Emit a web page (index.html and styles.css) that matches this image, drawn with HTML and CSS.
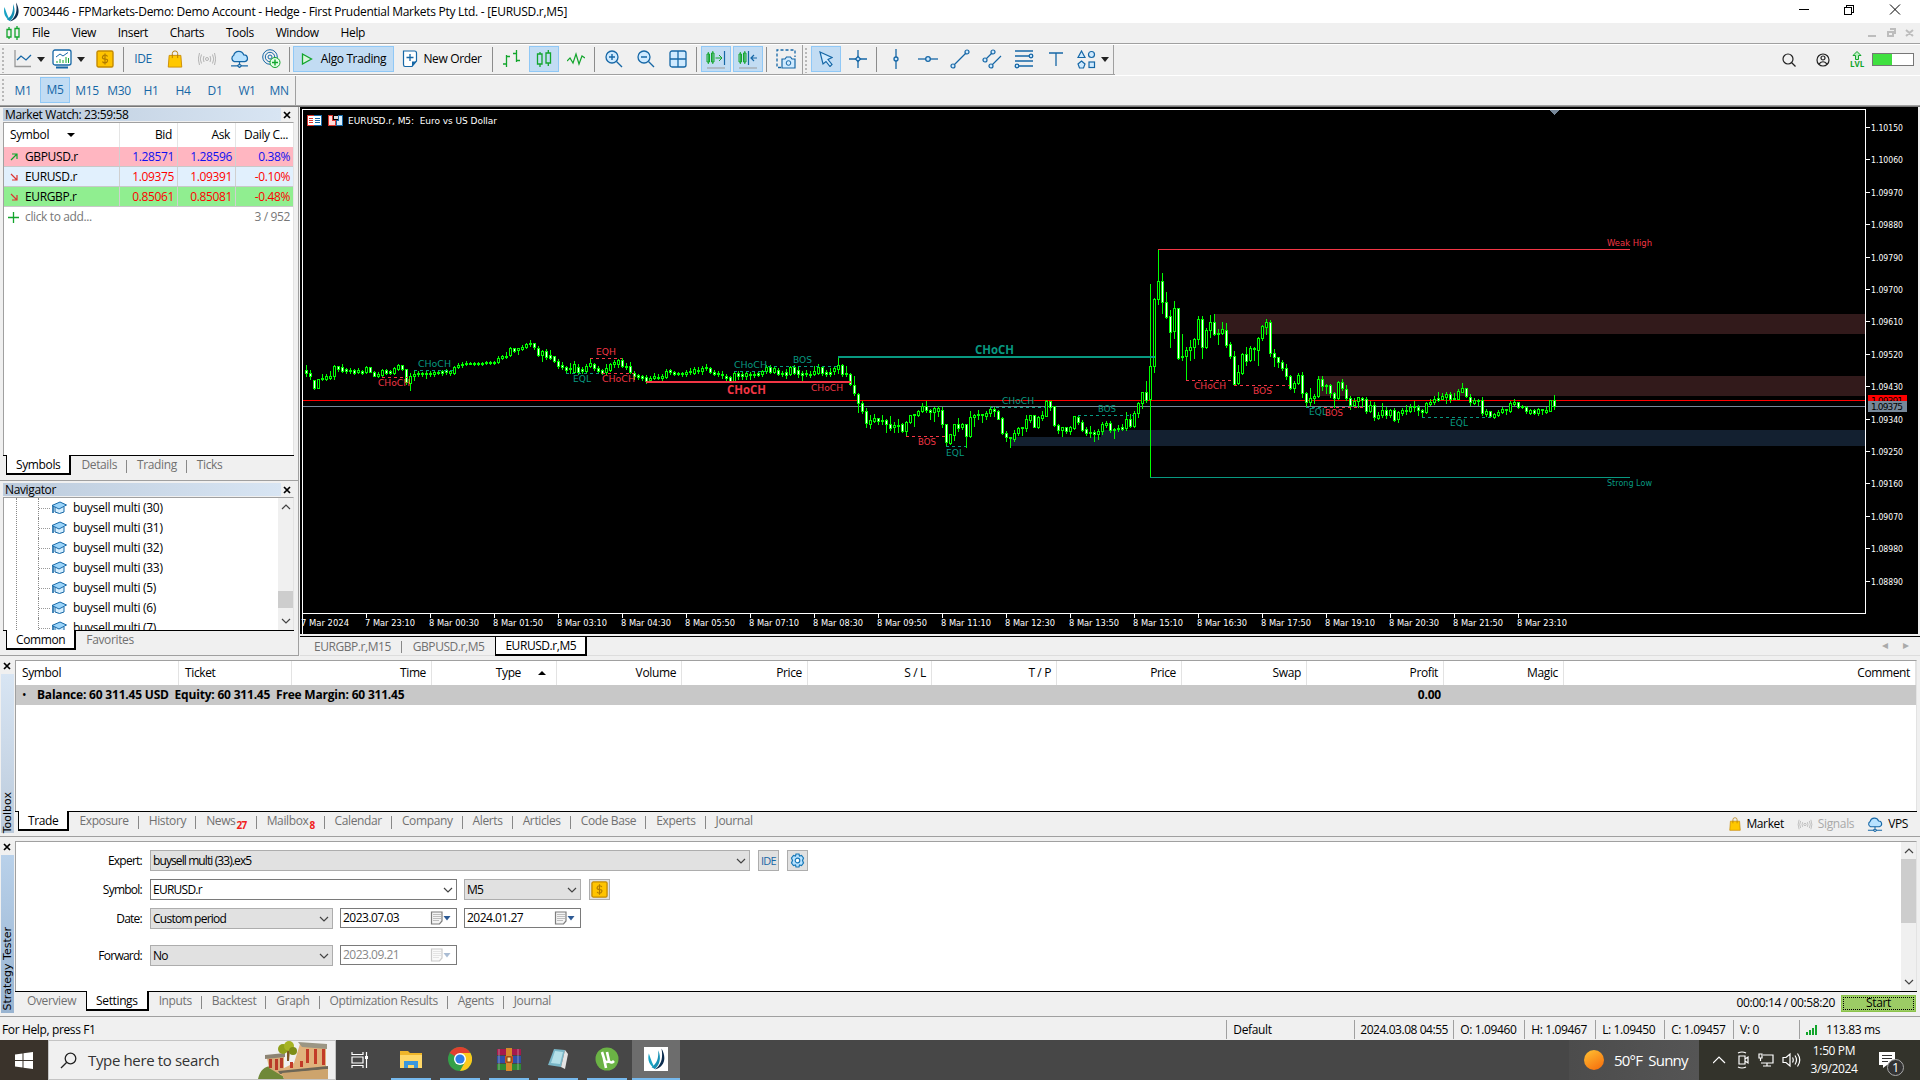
FILE: index.html
```html
<!DOCTYPE html>
<html lang="en">
<head>
    <meta charset="UTF-8">
    <title>7003446 - FPMarkets-Demo: Demo Account</title>
    <link rel="stylesheet" href="styles.css">
</head>
<body>
<svg class="defs" width="0" height="0">
    <defs>
        <symbol id="logo" viewBox="0 0 18 20">
            <path d="M2.500 5C1 11 3 16 8.500 19C6 15 4.500 11 2.500 5Z" fill="#18a3c4"/>
            <path d="M5 17.500C10 14 11.500 9 11 2C14 9 12.500 15 8 19Z" fill="#1590b4"/>
            <path d="M8 19.500C14 15 15.500 9 14 0.500C18.500 8 17.500 17 8 19.500Z" fill="#0c2c4e"/>
        </symbol>
        <symbol id="close" viewBox="0 0 8 8"><path d="M1 1L7 7M7 1L1 7" stroke="#000" stroke-width="1.700"/></symbol>
        <symbol id="bag" viewBox="0 0 16 20">
            <path d="M1.500 6H14.500L15.500 19H0.500Z" fill="#ffc800" stroke="#c98a00"/>
            <path d="M5 9V4A3 3 0 0 1 11 4V9" fill="none" stroke="#b07800"/>
        </symbol>
        <symbol id="signal" viewBox="0 0 18 14">
            <g fill="none" stroke="#b4b4b4" stroke-width="1"><circle cx="9" cy="7" r="1.500"/>
            <path d="M6 4Q4.500 7 6 10M3.500 2.500Q1 7 3.500 11.500M12 4Q13.500 7 12 10M14.500 2.500Q17 7 14.500 11.500M1.500 1Q-1 7 1.500 13M16.500 1Q19 7 16.500 13"/></g>
        </symbol>
        <symbol id="cloud" viewBox="0 0 18 17">
            <path d="M4 11A3.300 3.300 0 0 1 3.500 5A5 5 0 0 1 13 4.500A3.300 3.300 0 0 1 14 11Z" fill="#b8e2ff" stroke="#1667a6" stroke-width="1.200"/>
            <path d="M9 11V14M1 15H6.500M11.500 15H17M7 15L9 13.500L11 15L9 16.500Z" fill="none" stroke="#1667a6" stroke-width="1.200"/>
        </symbol>
        <symbol id="dollar" viewBox="0 0 18 18">
            <rect x="1" y="1" width="16" height="16" rx="1.500" fill="#ffc400" stroke="#c48a00" stroke-width="1.400"/>
            <path d="M11.500 6.500Q11 5 9 5T6.500 7T9 9T11.500 11T9 13T6.500 11.500M9 3.500V14.500" fill="none" stroke="#b07a00" stroke-width="1.200"/>
        </symbol>
        <symbol id="hat" viewBox="0 0 16 14">
            <path d="M4 6V11Q8.500 14 13 11V6" fill="#d6efff" stroke="#1667a6"/>
            <path d="M1 4.500L9 1L15.500 4L8 8Z" fill="#9bd5fb" stroke="#1667a6"/>
            <path d="M2 5V12" stroke="#1667a6" stroke-width="1.600"/>
        </symbol>
        <symbol id="calendar" viewBox="0 0 20 14">
            <path d="M1 1H11.500V10L9 13H1Z" fill="#f4f4f4" stroke="#7d7d7d" stroke-width="1.200"/>
            <path d="M3 3.500H10M3 5.500H10M3 7.500H10M3 9.500H9" stroke="#888" stroke-dasharray="1 1"/>
            <path d="M13 5H20L16.500 9.500Z" fill="#2d5a94"/>
        </symbol>
        <symbol id="down" viewBox="0 0 10 6"><path d="M1 1L5 5L9 1" fill="none" stroke="#444" stroke-width="1.200"/></symbol>
    </defs>
</svg>

<div class="app">
    <header class="titlebar">
        <svg width="18" height="20"><use href="#logo"/></svg>
        <span class="title">7003446 - FPMarkets-Demo: Demo Account - Hedge - First Prudential Markets Pty Ltd. - [EURUSD.r,M5]</span>
        <svg class="winctl" width="106" height="14" viewBox="0 0 106 14" fill="none" stroke="#000" shape-rendering="crispEdges">
            <path d="M1 6.500H11M46.500 4.500H53.500V11.500H46.500ZM48.500 4V2.500H55.500V9.500H54"/>
            <path d="M92 1.500L102 11.500M102 1.500L92 11.500" shape-rendering="auto"/>
        </svg>
    </header>
    <nav class="menubar">
        <svg width="14" height="16" viewBox="0 0 14 16" fill="none" stroke="#12a52c" stroke-width="1.300"><path d="M1 4.500H5V12H1ZM3 2V4.500M3 12V14M9 3.500H13V12H9ZM11 1V3.500M11 12V15"/></svg>
        <span>File</span><span>View</span><span>Insert</span><span>Charts</span><span>Tools</span><span>Window</span><span>Help</span>
        <svg class="mdictl" width="48" height="10" viewBox="0 0 48 10" fill="none" stroke="#bdbdbd" stroke-width="2"><path d="M0 8H8M20 4H25V8H20ZM22 1H27V6M38 2L45 8M45 2L38 8"/></svg>
    </nav>

    <div class="toolbar">
        <i class="grip"></i>
        <div class="tool drop w40"><svg width="18" height="20" viewBox="0 0 18 20" fill="none"><path d="M1 1V17.500H17" stroke="#999" stroke-width="1.300"/><path d="M3 11L7 7L12 11L17 6" stroke="#1667a6" stroke-width="1.300"/></svg><b></b></div>
        <div class="tool drop w43"><svg width="20" height="20" viewBox="0 0 20 20"><rect x="1" y="1" width="18" height="15" rx="2" fill="#fff" stroke="#1667a6" stroke-width="1.300"/><path d="M4 8L8 5L11 7L16 3.500" fill="none" stroke="#1667a6"/><path d="M5 14V12M8 14V10M11 14V11M14 14V8M16.500 14V9" stroke="#12a52c"/><path d="M4 18.500H16" stroke="#1667a6" stroke-width="2"/></svg><b></b></div>
        <div class="tool"><svg width="18" height="18"><use href="#dollar"/></svg></div>
        <i class="sep"></i>
        <div class="tool blue">IDE</div>
        <div class="tool"><svg width="16" height="18"><use href="#bag"/></svg></div>
        <div class="tool"><svg width="18" height="14"><use href="#signal"/></svg></div>
        <div class="tool"><svg width="19" height="18"><use href="#cloud"/></svg></div>
        <div class="tool"><svg width="19" height="20" viewBox="0 0 19 20" fill="none" stroke="#1667a6"><circle cx="8" cy="8" r="2"/><circle cx="8" cy="8" r="4.700"/><circle cx="8" cy="8" r="7.300"/><circle cx="13" cy="13.500" r="5" fill="#e2ffe5" stroke="#12a52c"/><path d="M10 13.500H16M13 10.500V16.500" stroke="#12a52c" stroke-width="1.400"/></svg></div>
        <i class="sep"></i>
        <div class="tool on algo"><svg width="12" height="12" viewBox="0 0 12 12"><path d="M1.500 1L10.500 6L1.500 11Z" fill="#d8f5dc" stroke="#12a52c" stroke-width="1.300"/></svg>Algo Trading</div>
        <div class="tool order"><svg width="16" height="18" viewBox="0 0 16 18"><path d="M1.500 1H12.500Q14.500 1 14.500 3V11L10 16.500H3Q1.500 16.500 1.500 14.500Z" fill="#fff" stroke="#1667a6" stroke-width="1.200"/><path d="M10 16.500V11.500H14.500Z" fill="#1667a6"/><path d="M8 4V11M4.500 7.500H11.500" stroke="#1667a6" stroke-width="1.300"/></svg>New Order</div>
        <i class="sep"></i>
        <div class="tool"><svg width="18" height="18" viewBox="0 0 18 18" fill="none" stroke="#12a52c" stroke-width="1.300"><path d="M0 14H3.500M3.500 5V17M3.500 6.500H7M10 3.500H13.500M13.500 0V12M13.500 10.500H17"/></svg></div>
        <div class="tool on"><svg width="16" height="18" viewBox="0 0 16 18" fill="none" stroke="#12a52c" stroke-width="1.300"><path d="M1.500 4H6V14H1.500ZM4 2V4M4 14V17M10 3H14.500V13H10ZM12.300 0V3M12.300 13V16"/></svg></div>
        <div class="tool"><svg width="18" height="14" viewBox="0 0 18 14" fill="none" stroke="#12a52c" stroke-width="1.200"><path d="M0 9L3 6L6 11L9 2L12 12L15 4L18 6"/></svg></div>
        <i class="sep"></i>
        <div class="tool"><svg width="18" height="18" viewBox="0 0 18 18"><circle cx="7" cy="7" r="6" fill="#cfeaff" stroke="#1667a6" stroke-width="1.300"/><path d="M11.500 11.500L17 17M7 4V10M4 7H10" stroke="#1667a6" stroke-width="1.400"/></svg></div>
        <div class="tool"><svg width="18" height="18" viewBox="0 0 18 18"><circle cx="7" cy="7" r="6" fill="#cfeaff" stroke="#1667a6" stroke-width="1.300"/><path d="M11.500 11.500L17 17M4 7H10" stroke="#1667a6" stroke-width="1.400"/></svg></div>
        <div class="tool"><svg width="18" height="18" viewBox="0 0 18 18"><rect x="1" y="1" width="16" height="16" rx="2" fill="#cfeaff" stroke="#1667a6" stroke-width="1.300"/><path d="M9 1V17M1 9H17" stroke="#1667a6" stroke-width="1.300"/></svg></div>
        <i class="sep"></i>
        <div class="tool on"><svg width="20" height="20" viewBox="0 0 20 20" fill="none"><path d="M1 5H3.500V13H1ZM5.500 4H8V13H5.500ZM2.300 3V15M6.800 2V15M9.500 9H16M13 6L16 9L13 12" stroke="#12a52c"/><path d="M18.500 2V16" stroke="#1667a6" stroke-width="1.200"/><path d="M1 19H19" stroke="#999"/></svg></div>
        <div class="tool on"><svg width="20" height="20" viewBox="0 0 20 20" fill="none"><path d="M1 5H3.500V13H1ZM5.500 4H8V13H5.500ZM2.300 3V15M6.800 2V15" stroke="#12a52c"/><path d="M10.500 2V16M19 9H13M16 6L13 9L16 12" stroke="#1667a6" stroke-width="1.200"/><path d="M1 19H19" stroke="#999"/></svg></div>
        <i class="sep"></i>
        <div class="tool"><svg width="20" height="20" viewBox="0 0 20 20" fill="none" stroke="#1667a6"><path d="M5 18.500H1V1H19V8" stroke-dasharray="3 2" stroke-width="1.300"/><path d="M6 10H9L10.500 8H14.500L16 10H19V19H6Z" fill="#cfeaff" stroke-width="1.200"/><circle cx="12.500" cy="14" r="2.300"/></svg></div>
        <i class="endbar"></i>
        <i class="grip g2"></i>
        <div class="tool on"><svg width="14" height="16" viewBox="0 0 14 16"><path d="M1 1L13 6.500L9 8.500L13 13.500L11 15.500L7 10.500L4 13Z" fill="#cfeaff" stroke="#1667a6" stroke-width="1.200"/></svg></div>
        <div class="tool"><svg width="18" height="18" viewBox="0 0 18 18" stroke="#1667a6" stroke-width="1.300"><path d="M9 0V18M0 9H18"/><path d="M9 6.500L11.500 9L9 11.500L6.500 9Z" fill="#cfeaff"/></svg></div>
        <i class="sep"></i>
        <div class="tool"><svg width="18" height="20" viewBox="0 0 18 20" stroke="#1667a6" stroke-width="1.300"><path d="M9 0V20"/><circle cx="9" cy="10" r="2" fill="#cfeaff"/></svg></div>
        <div class="tool"><svg width="20" height="18" viewBox="0 0 20 18" stroke="#1667a6" stroke-width="1.300"><path d="M0 9H20"/><circle cx="10" cy="9" r="2.300" fill="#cfeaff"/></svg></div>
        <div class="tool"><svg width="20" height="20" viewBox="0 0 20 20" stroke="#1667a6" stroke-width="1.200" fill="#cfeaff"><path d="M3 17L17 3"/><circle cx="3" cy="17" r="2"/><circle cx="17" cy="3" r="2"/></svg></div>
        <div class="tool"><svg width="20" height="20" viewBox="0 0 20 20" stroke="#1667a6" stroke-width="1.200" fill="#cfeaff"><path d="M3 11L11 3M9 17L19 7"/><circle cx="3" cy="11" r="2"/><circle cx="11" cy="3" r="2"/><circle cx="9" cy="17" r="2"/></svg></div>
        <div class="tool"><svg width="20" height="20" viewBox="0 0 20 20" stroke="#1667a6" stroke-width="1.300" fill="#cfeaff"><path d="M1 2H19M1 7H15M1 12H19M5 17H19"/><circle cx="17" cy="7" r="1.800"/><circle cx="3" cy="17" r="1.800"/></svg></div>
        <div class="tool"><svg width="14" height="14" viewBox="0 0 14 14" stroke="#1667a6" stroke-width="1.300"><path d="M0 1H14M7 1V14"/></svg></div>
        <div class="tool drop shapes"><svg width="19" height="19" viewBox="0 0 19 19" stroke="#1667a6" fill="#cfeaff" stroke-width="1.200"><path d="M4.500 1L8 7.500H1ZM4.500 11L8 14L6.500 18H2.500L1 14Z"/><circle cx="14.500" cy="4.500" r="3"/><rect x="12" y="12" width="5.500" height="5.500"/></svg><b></b></div>
        <i class="endbar"></i>
        <div class="account">
            <svg width="14" height="14" viewBox="0 0 14 14" fill="none" stroke="#222" stroke-width="1.200"><circle cx="6" cy="6" r="5"/><path d="M9.500 9.500L13.500 13.500"/></svg>
            <svg width="14" height="14" viewBox="0 0 14 14" fill="none" stroke="#222" stroke-width="1.200"><circle cx="7" cy="7" r="6"/><circle cx="7" cy="5" r="2"/><path d="M3 11Q7 6.500 11 11"/></svg>
            <div class="lvl"><svg width="10" height="9" viewBox="0 0 10 9"><path d="M5 0.500L9 4.500H6.500V8.500H3.500V4.500H1Z" fill="#b9f0c0" stroke="#12a52c"/></svg>LVL</div>
            <div class="battery"><i></i></div>
        </div>
    </div>
    <div class="periods">
        <i class="grip"></i>
        <span>M1</span><span class="on">M5</span><span>M15</span><span>M30</span><span>H1</span><span>H4</span><span>D1</span><span>W1</span><span>MN</span>
        <i class="endbar"></i>
    </div>

    <main class="workspace">
        <aside class="left">
            <section class="panel watch">
                <div class="cap"><span>Market Watch: 23:59:58</span><svg width="8" height="8"><use href="#close"/></svg></div>
                <div class="pbody">
                    <div class="quote head"><span>Symbol<b class="tri"></b></span><span>Bid</span><span>Ask</span><span>Daily C...</span></div>
                    <div class="quote pink up"><span><svg width="8" height="8" viewBox="0 0 8 8"><path d="M1 7L7 1M2 1H7V6" fill="none" stroke="#12a52c" stroke-width="1.200"/></svg>GBPUSD.r</span><span>1.28571</span><span>1.28596</span><span>0.38%</span></div>
                    <div class="quote pale"><span><svg width="8" height="8" viewBox="0 0 8 8"><path d="M1 1L7 7M7 2V7H2" fill="none" stroke="#d33" stroke-width="1.200"/></svg>EURUSD.r</span><span>1.09375</span><span>1.09391</span><span>-0.10%</span></div>
                    <div class="quote green"><span><svg width="8" height="8" viewBox="0 0 8 8"><path d="M1 1L7 7M7 2V7H2" fill="none" stroke="#d33" stroke-width="1.200"/></svg>EURGBP.r</span><span>0.85061</span><span>0.85081</span><span>-0.48%</span></div>
                    <div class="addrow"><svg width="11" height="11" viewBox="0 0 11 11"><path d="M5.500 0V11M0 5.500H11" stroke="#12a52c" stroke-width="1.300"/></svg><span>click to add...</span><span>3 / 952</span></div>
                </div>
                <div class="tabs"><span class="cur">Symbols</span><span>Details</span><span>Trading</span><span class="last">Ticks</span></div>
            </section>
            <section class="panel nav">
                <div class="cap"><span>Navigator</span><svg width="8" height="8"><use href="#close"/></svg></div>
                <div class="pbody tree">
                    <ul>
                        <li><svg width="16" height="14"><use href="#hat"/></svg>buysell multi (30)</li>
                        <li><svg width="16" height="14"><use href="#hat"/></svg>buysell multi (31)</li>
                        <li><svg width="16" height="14"><use href="#hat"/></svg>buysell multi (32)</li>
                        <li><svg width="16" height="14"><use href="#hat"/></svg>buysell multi (33)</li>
                        <li><svg width="16" height="14"><use href="#hat"/></svg>buysell multi (5)</li>
                        <li><svg width="16" height="14"><use href="#hat"/></svg>buysell multi (6)</li>
                        <li><svg width="16" height="14"><use href="#hat"/></svg>buysell multi (7)</li>
                    </ul>
                    <div class="scroll"><svg class="flip" width="10" height="6"><use href="#down"/></svg><i></i><svg width="10" height="6"><use href="#down"/></svg></div>
                </div>
                <div class="tabs"><span class="cur">Common</span><span class="last">Favorites</span></div>
            </section>
        </aside>
        <section class="chartbox">
            <svg id="chart" width="1618" height="527" viewBox="300 107 1618 527">
                <rect x="300" y="107" width="1618" height="527" fill="#000"/>
                <g shape-rendering="crispEdges">
                    <path fill="#321a1b" d="M1214 314H1865V334H1214ZM1318 376H1865V396H1318Z"/>
                    <path fill="#132030" d="M1010 437H1101V430H1865V446H1010Z"/>
                    <path d="M302 400.500H1865" stroke="#f00"/>
                    <path d="M302 406.500H1865" stroke="#778899"/>
                </g>
                <g id="candles" shape-rendering="crispEdges"></g>
                <g shape-rendering="crispEdges" fill="none">
                    <path d="M646 382H851" stroke="#f23645" stroke-width="2"/>
                    <path d="M838 357H1155" stroke="#089981" stroke-width="2"/>
                    <path d="M1158 249.500H1630" stroke="#f23645"/>
                    <path d="M1150 477.500H1630" stroke="#089981"/>
                    <path stroke="#f23645" stroke-dasharray="3 3" d="M382 377.500H408M590 358.500H622M602 373.500H634M906 436.500H946M1186 380.500H1234M1234 385.500H1290M1324 407.500H1366"/>
                    <path stroke="#089981" stroke-dasharray="3 3" d="M414 370.500H454M566 373.500H602M734 371.500H766M768 366.500H838M946 446.500H966M990 407.500H1046M1078 415.500H1134M1306 407.500H1324M1422 417.500H1494"/>
                    <path stroke="#fff" d="M302.500 634V109.500H1865.500V613.500H302"/>
                    <path fill="#778899" d="M1549 110H1559L1554 115Z"/>
                </g>
                <g class="marks" id="marks"></g>
                <g class="axis" id="axis"></g>
                <rect x="1868" y="395" width="39" height="7" fill="#f00"/>
                <svg x="1868" y="395" width="39" height="6" viewBox="1868 395 39 6"><text class="tag" x="1871" y="404" textLength="32">1.09391</text></svg>
                <rect x="1868" y="401" width="39" height="11" fill="#778899"/>
                <text class="tag" x="1871" y="410" textLength="32">1.09375</text>
                <g shape-rendering="crispEdges">
                    <path d="M307 115H314V126H307Z" fill="#d8372f"/><path d="M314 115H322V126H314Z" fill="#1667a6"/><path d="M308 116H321V125H308Z" fill="#fff"/>
                    <path d="M309 118.500H313M309 120.500H313M309 122.500H313" stroke="#d8372f"/><path d="M315 118.500H320M315 120.500H320M315 122.500H320" stroke="#1667a6"/>
                    <path d="M328.500 115.500H332.500V120.500H335.500V125.500H328.500Z" fill="#ffdad8" stroke="#d8372f"/><path d="M338.500 115.500H342.500V125.500H336.500V120.500H338.500Z" fill="#d8efff" stroke="#1667a6"/>
                    <path d="M334 116H338V119H334Z" fill="#ddd"/>
                </g>
                <text class="caption" x="348" y="124" textLength="149">EURUSD.r, M5:  Euro vs US Dollar</text>
            </svg>
            <div class="charttabs"><span>EURGBP.r,M15</span><span class="nb">GBPUSD.r,M5</span><span class="cur">EURUSD.r,M5</span><em>◂</em><em>▸</em></div>
        </section>
    </main>

    <section class="dock toolbox">
        <div class="side"><svg width="8" height="8"><use href="#close"/></svg><div><span>Toolbox</span></div></div>
        <div class="dockmain">
            <div class="dockbody">
                <div class="cols">
                    <span class="l">Symbol</span><span class="l">Ticket</span><span>Time</span><span class="type">Type<b class="tri upw"></b></span><span>Volume</span><span>Price</span><span>S / L</span><span>T / P</span><span>Price</span><span>Swap</span><span>Profit</span><span>Magic</span><span>Comment</span>
                </div>
                <div class="balance"><span><i>•</i>Balance: 60 311.45 USD&nbsp; Equity: 60 311.45&nbsp; Free Margin: 60 311.45</span><span class="profit">0.00</span></div>
            </div>
            <div class="tabs">
                <span class="cur">Trade</span><span>Exposure</span><span>History</span><span>News<sub>27</sub></span><span>Mailbox<sub>8</sub></span><span>Calendar</span><span>Company</span><span>Alerts</span><span>Articles</span><span>Code Base</span><span>Experts</span><span class="last">Journal</span>
                <div class="services">
                    <svg width="12" height="14"><use href="#bag"/></svg><b>Market</b>
                    <svg width="16" height="11"><use href="#signal"/></svg><b class="off">Signals</b>
                    <svg width="16" height="15"><use href="#cloud"/></svg><b>VPS</b>
                </div>
            </div>
        </div>
    </section>

    <section class="dock tester">
        <div class="side"><svg width="8" height="8"><use href="#close"/></svg><div><span>Strategy Tester</span></div></div>
        <div class="dockmain">
            <div class="dockbody form">
                <div class="fields">
                    <div class="row"><label>Expert:</label><div class="sel w599 tight">buysell multi (33).ex5<svg width="10" height="6"><use href="#down"/></svg></div><div class="mini blue">IDE</div>
                        <div class="mini g8"><svg width="15" height="15" viewBox="0 0 15 15" fill="#b8e2ff" stroke="#1677b6" stroke-width="1.200"><path d="M6 1H9L9.500 3L11.500 2.500L13.500 5L12.500 7.500L13.500 10L11.500 12.500L9.500 12L9 14H6L5.500 12L3.500 12.500L1.500 10L2.500 7.500L1.500 5L3.500 2.500L5.500 3Z"/><circle cx="7.500" cy="7.500" r="2.300" fill="#fff"/></svg></div></div>
                    <div class="row"><label>Symbol:</label><div class="sel white w307">EURUSD.r<svg width="10" height="6"><use href="#down"/></svg></div><div class="sel w117">M5<svg width="10" height="6"><use href="#down"/></svg></div><div class="mini g8"><svg width="17" height="17"><use href="#dollar"/></svg></div></div>
                    <div class="row"><label>Date:</label><div class="sel w183">Custom period<svg width="10" height="6"><use href="#down"/></svg></div><div class="date">2023.07.03<svg width="21" height="14"><use href="#calendar"/></svg></div><div class="date">2024.01.27<svg width="21" height="14"><use href="#calendar"/></svg></div></div>
                    <div class="row fwd"><label>Forward:</label><div class="sel w183">No<svg width="10" height="6"><use href="#down"/></svg></div><div class="date off">2023.09.21<svg width="21" height="14"><use href="#calendar"/></svg></div></div>
                </div>
                <div class="scroll"><svg class="flip" width="10" height="6"><use href="#down"/></svg><i></i><svg width="10" height="6"><use href="#down"/></svg></div>
            </div>
            <div class="tabs">
                <span class="nb">Overview</span><span class="cur">Settings</span><span>Inputs</span><span>Backtest</span><span>Graph</span><span>Optimization Results</span><span>Agents</span><span class="last">Journal</span>
                <div class="run"><b>00:00:14 / 00:58:20</b><button>Start</button></div>
            </div>
        </div>
    </section>

    <footer class="status">
        <span class="help">For Help, press F1</span>
        <span class="s128">Default</span><span class="s99">2024.03.08 04:55</span><span class="s71">O: 1.09460</span><span class="s71">H: 1.09467</span><span class="s69">L: 1.09450</span><span class="s69">C: 1.09457</span><span class="s66">V: 0</span>
        <span class="s121"><svg width="12" height="10" viewBox="0 0 12 10"><path d="M1 10V7M4 10V5M7 10V3M10 10V0" stroke="#12a52c" stroke-width="2"/></svg>113.83 ms</span>
    </footer>

    <div class="taskbar">
        <div class="start"><svg width="18" height="17" viewBox="0 0 18 17"><path fill="#fff" d="M0 2.500L7.500 1.500V8H0ZM8.500 1.300L18 0V8H8.500ZM0 9H7.500V15.500L0 14.500ZM8.500 9H18V17L8.500 15.700Z"/></svg></div>
        <div class="search">
            <svg width="17" height="17" viewBox="0 0 17 17" fill="none" stroke="#222" stroke-width="1.300"><circle cx="10.500" cy="6.500" r="5.300"/><path d="M6.800 10.200L1 16"/></svg>
            <span>Type here to search</span>
            <svg class="art" width="72" height="38" viewBox="0 0 72 38">
                <path d="M0 38Q3 24 16 25Q24 28 26 38Z" fill="#6f8838"/>
                <path d="M9 17L26 15V36L11 27Z" fill="#d8ab78"/><path d="M7 14L27 12V16L7 18Z" fill="#8c8474"/>
                <path d="M11 18H14V27H11ZM17 18H20V29H17ZM22 17H25V27H22Z" fill="#b93a28"/>
                <path d="M42 3L68 3V30L22 34V29L36 22Z" fill="#e0b27c"/>
                <path d="M40 1L69 3V8L44 6Z" fill="#9b9684"/>
                <path d="M48 8H51V22H48ZM56 8H59V23H56ZM64 8H67V24H64ZM32 21H35V27H32ZM42 20H45V26H42Z" fill="#c23b28"/>
                <path d="M20 30L70 25V28L22 33Z" fill="#6d6656"/><path d="M24 32L70 28V38H26Z" fill="#cda46d"/>
                <path d="M29 8H32L31 20H29Z" fill="#7b5524"/><circle cx="25" cy="8" r="5" fill="#8fa01c"/><circle cx="31" cy="5" r="5" fill="#a7b424"/><circle cx="35" cy="10" r="4" fill="#7d8d18"/>
            </svg>
        </div>
        <div class="task plain"><svg width="18" height="18" viewBox="0 0 18 18" fill="none" stroke="#fff" stroke-width="1.200"><path d="M1 1V3.500H12V1M1 17V14.500H12V17M1 6H12V12H1ZM15.500 1V17"/><path d="M14 6.500H17" stroke-width="3"/></svg></div>
        <div class="task"><svg width="22" height="20" viewBox="0 0 22 20"><path d="M0 2H8L10 4H22V19H0Z" fill="#f0b62a"/><path d="M0 6H22V19H0Z" fill="#ffd868"/><path d="M4 19V12H18V19H14V16H8V19Z" fill="#3b97dd"/></svg></div>
        <div class="task"><svg width="24" height="24" viewBox="0 0 24 24"><circle cx="12" cy="12" r="12" fill="#34a048"/><path d="M12 12L1.600 6A12 12 0 0 1 22.400 6H12Z" fill="#e2402f"/><path d="M12 6H22.400A12 12 0 0 1 12 24L17 15Z" fill="#fbc91d"/><circle cx="12" cy="12" r="6" fill="#fff"/><circle cx="12" cy="12" r="4.600" fill="#2f7de8"/></svg></div>
        <div class="task"><svg width="24" height="23" viewBox="0 0 24 23"><path d="M0 1H24V7H0Z" fill="#a51a4c"/><path d="M0 8H24V15H0Z" fill="#2f4fa8"/><path d="M0 16H24V22H0Z" fill="#2f8a34"/><path d="M2 1V22M21 1V22" stroke="#ddd" stroke-opacity=".5"/><path d="M9 0H15V23H9Z" fill="#d5892a"/><path d="M8 8H16V15H8Z" fill="#c8501c"/><path d="M10 9H14V14H10Z" fill="#fae0a0" stroke="#7b4a10"/></svg></div>
        <div class="task"><svg width="22" height="22" viewBox="0 0 22 22"><path d="M7 1L18 2L14 19L1 17Z" fill="#79b7c8"/><path d="M8 3L16 4L13 16L4 15Z" fill="#b4e0e8"/><path d="M18 2L21 6L18 21L14 19Z" fill="#e4e4e4"/></svg></div>
        <div class="task"><svg width="24" height="24" viewBox="0 0 24 24"><circle cx="12" cy="12" r="11.500" fill="#6bb345"/><path d="M7 5L9.500 13Q11 16.500 14 14L12 5M14 14Q16 17 19 14M9 12L11 21" fill="none" stroke="#fff" stroke-width="2.600"/></svg></div>
        <div class="task cur"><svg width="24" height="24" viewBox="0 0 24 24"><rect width="24" height="24" fill="#fff"/><use href="#logo" x="2" y="1" width="20" height="22"/></svg></div>
        <div class="weather"><i></i><span>50°F&nbsp; Sunny</span></div>
        <div class="tray">
            <svg width="104" height="18" viewBox="0 0 104 18" fill="none" stroke="#fff" stroke-width="1.200">
                <path d="M0 12L6 6L12 12M26 5H32V13H26ZM32 8L35 6V12L32 10M25 2Q29 0 33 2M25 16Q29 18 33 16M50 4H60V12H48M54 12V15M50 15H58M46 3H49V7H46ZM47.500 7V10M70 6.500H73L77 3V15L73 11.500H70ZM79.500 6.500Q81 9 79.500 11.500M82 4.500Q85 9 82 13.500M84.500 2.500Q89 9 84.500 15.500"/>
            </svg>
            <div class="clock"><span>1:50 PM</span><span>3/9/2024</span></div>
            <div class="notes"><svg width="17" height="17" viewBox="0 0 17 17"><path d="M0 0H16V13H8L4 16V13H0Z" fill="#fff"/><path d="M3 3.500H13M3 6.500H13M3 9.500H9" stroke="#333"/></svg><b>1</b></div>
        </div>
    </div>
</div>
<script src="script.js"></script>
</body>
</html>
```
FILE: styles.css
```css
* {
    box-sizing: border-box;
}
body {
    margin: 0;
    overflow: hidden;
    background: #f0f0f0;
    font: 12px/16px "Open Sans", "Noto Sans", sans-serif;
    letter-spacing: -0.37px;
    color: #000;
}
svg {
    flex: none;
    display: block;
}
em, i, b {
    font-style: normal;
    font-weight: normal;
}
.defs {
    position: absolute;
}
.app {
    width: 1920px;
    height: 1080px;
    display: flex;
    flex-direction: column;
}

/* title + menu */
.titlebar {
    height: 23px;
    background: #fff;
    display: flex;
    align-items: center;
    padding-left: 2px;
}
.title {
    margin-left: 3px;
    letter-spacing: -0.28px;
}
.winctl {
    margin-left: auto;
    margin-right: 16px;
    margin-top: -3px;
}
.menubar {
    height: 21px;
    display: flex;
    align-items: center;
    padding: 0 4px 0 6px;
    border-bottom: 1px solid #a0a0a0;
}
.menubar span {
    margin-right: 21.8px;
}
.menubar span:first-of-type {
    margin-left: 12px;
}
.mdictl {
    margin-left: auto;
}

/* toolbars */
.toolbar {
    height: 31px;
    display: flex;
    border-top: 1px solid #fff;
    padding-top: 1px;
    position: relative;
}
.toolbar::after {
    content: "";
    position: absolute;
    left: 0;
    bottom: 0;
    width: 1115px;
    height: 1px;
    background: #a0a0a0;
}
.grip {
    width: 6px;
    margin: 1px 0 2px;
    background: radial-gradient(circle at 3px 2px, #b8b8b8 1px, transparent 1.5px) 0 0 / 6px 4px;
}
.g2 {
    width: 7px;
}
.tool {
    width: 32px;
    height: 26px;
    display: flex;
    align-items: center;
    justify-content: center;
}
.on {
    background: #c2dcf3;
    border: 1px solid #90c8f6;
    margin: 0 1px;
}
.tool.on {
    width: 30px;
}
.tool b {
    border: 4px solid transparent;
    border-top: 5px solid #222;
    border-bottom: 0;
}
.drop {
    justify-content: flex-start;
}
.drop b {
    margin-left: 5px;
}
.w40 {
    width: 40px;
    padding-left: 8px;
}
.w43 {
    width: 43px;
    padding-left: 6px;
}
.shapes {
    width: 41px;
    padding-left: 5px;
}
.sep {
    width: 6px;
    height: 25px;
    margin-top: 1px;
    border-left: 2px solid transparent;
    background: linear-gradient(#8c8c8c, #8c8c8c) 0 0 / 1px 100% no-repeat;
}
.blue {
    color: #1667a6;
}
.tool.algo {
    width: 101px;
    margin: 0;
    gap: 8px;
}
.tool.order {
    width: 96px;
    gap: 5px;
}
.endbar {
    width: 1px;
    margin-top: -1px;
    background: #a0a0a0;
}
.account {
    margin-left: auto;
    display: flex;
    align-items: center;
    height: 27px;
    padding-right: 6px;
}
.account svg {
    margin-right: 20px;
}
.lvl {
    font-size: 8px;
    line-height: 8px;
    font-weight: bold;
    letter-spacing: 0;
    color: #12a52c;
    width: 14px;
    margin-right: 8px;
}
.account .lvl svg {
    margin: 0 2px;
}
.battery {
    width: 42px;
    height: 13px;
    border: 1px solid #777;
    background: #fff;
}
.battery i {
    display: block;
    width: 19px;
    height: 11px;
    background: #40e040;
}
.periods {
    height: 31px;
    border-top: 1px solid #fff;
    border-bottom: 1px solid #a0a0a0;
    box-shadow: 0 1px #777;
    display: flex;
    padding-top: 1px;
    position: relative;
}
.periods .grip {
    width: 7px;
}
.periods span {
    width: 32px;
    height: 27px;
    display: flex;
    align-items: center;
    justify-content: center;
    color: #1667a6;
}
.periods span.on {
    width: 30px;
    height: 26px;
}

/* left panels */
.workspace {
    height: 552px;
    margin-bottom: -1px;
    display: flex;
}
.left {
    width: 299px;
    border-right: 1px solid #a0a0a0;
    border-bottom: 1px solid #a0a0a0;
    height: 550px;
}
.panel {
    padding: 2px 4px 0 3px;
    display: flex;
    flex-direction: column;
}
.watch {
    height: 375px;
    border-bottom: 1px solid #a0a0a0;
}
.nav {
    height: 174px;
}
.cap {
    height: 13px;
    display: flex;
    align-items: center;
    padding: 0 3px 0 2px;
    margin-bottom: 1px;
    background: linear-gradient(90deg, #bccbdc, #d8e5f3 278px, transparent 278px);
}
.cap span {
    flex: 1;
}
.pbody {
    background: #fff;
    border: 1px solid #a0a0a0;
    border-right-color: #e3e3e3;
    border-bottom: 0;
    flex: 1;
    overflow: hidden;
}
.quote {
    display: flex;
    height: 20px;
    border-bottom: 1px solid #c8c8c8;
    color: #f00;
}
.quote span {
    width: 58px;
    padding-right: 3px;
    text-align: right;
    line-height: 20px;
    border-left: 1px solid #d0d0d0;
}
.quote span:first-child {
    width: 115px;
    border: 0;
    color: #000;
    display: flex;
    align-items: center;
    padding-left: 6px;
    gap: 7px;
}
.quote.head {
    height: 24px;
    color: #000;
    border: 0;
}
.quote.head span {
    line-height: 24px;
    padding-right: 5px;
    border-color: #e5e5e5;
    white-space: nowrap;
}
.quote.head span:first-child {
    gap: 18px;
}
.tri {
    border: 4px solid transparent;
    border-top: 4px solid #000;
    border-bottom: 0;
}
.tri.upw {
    border: 4px solid transparent;
    border-bottom: 4px solid #000;
    border-top: 0;
    margin: 0 5px 0 17px;
}
.pink { background: #ffb6c1; }
.pale { background: #e1f0fd; }
.green { background: #90ee90; }
.quote.up { color: #1010f0; }
.addrow {
    display: flex;
    align-items: center;
    height: 20px;
    padding: 0 3px 0 4px;
    color: #777;
}
.addrow span {
    margin-left: 6px;
}
.addrow span:last-child {
    margin-left: auto;
}
.tabs {
    height: 25px;
    border-top: 1px solid #000;
    display: flex;
    align-items: flex-start;
    color: #707070;
    padding-left: 3px;
}
.tabs > span {
    height: 18px;
    line-height: 18px;
    padding: 0 10px;
    background: linear-gradient(#888, #888) 100% 4px / 1px 13px no-repeat;
    white-space: nowrap;
}
.tabs > span.nb, .tabs > span.last {
    background: none;
}
.tabs > span.cur {
    background: #fff;
    color: #000;
    border: 1px solid #000;
    border-top: 0;
    border-bottom-width: 2px;
    border-right-width: 2px;
    height: 20px;
    line-height: 19px;
    margin-top: -1px;
    padding: 0 9px;
}
.tree {
    display: flex;
}
.tree ul {
    list-style: none;
    margin: 0 0 0 12px;
    padding: 0 0 0 21px;
    border-left: 1px dotted #888;
    flex: 1;
}
.tree li {
    height: 20px;
    display: flex;
    align-items: center;
    gap: 6px;
    border-left: 1px dotted #888;
    padding-left: 12px;
    background: repeating-linear-gradient(90deg, #999 0 1px, transparent 1px 2px) 0 10px / 11px 1px no-repeat;
    letter-spacing: -0.3px;
}
.scroll {
    width: 15px;
    background: #f0f0f0;
    display: flex;
    flex-direction: column;
    align-items: center;
    padding: 6px 0;
}
.scroll i {
    width: 15px;
    height: 17px;
    background: #cdcdcd;
    margin: auto 0 10px;
}
.flip {
    transform: scaleY(-1);
}

/* chart */
.chartbox {
    flex: 1;
    padding-left: 1px;
    padding-top: 1px;
}
#chart text {
    font-family: "DejaVu Sans", sans-serif;
    font-size: 9px;
    letter-spacing: 0;
    white-space: pre;
}
#chart .axis text, #chart .caption {
    fill: #fff;
}
#chart .tag {
    fill: #000;
}
#chart .marks .r { fill: #f23645; }
#chart .marks .g { fill: #089981; }
#chart .marks .big {
    font: bold 12px "Open Sans";
}
.charttabs {
    margin-top: 2px;
    height: 20px;
    border-top: 1px solid #000;
    border-bottom: 1px solid #ddd;
    display: flex;
    color: #707070;
    padding-left: 3px;
    letter-spacing: -0.45px;
}
.charttabs span {
    line-height: 20px;
    padding: 0 11px;
    background: linear-gradient(#888, #888) 100% 4px / 1px 12px no-repeat;
}
.charttabs .nb {
    background: none;
}
.charttabs .cur {
    background: #fff;
    color: #000;
    border: 1px solid #000;
    border-width: 0 2px 2px 1px;
    height: 19px;
    line-height: 18px;
    padding: 0 9px;
}
.charttabs em {
    color: #aaa;
    width: 21px;
    text-align: center;
}
.charttabs em:first-of-type {
    margin-left: auto;
}
.charttabs em:last-child {
    margin-right: 4px;
}

/* docked panels */
.dock {
    display: flex;
    padding: 3px 3px 0 0;
    border-bottom: 1px solid #a0a0a0;
    height: 180px;
    flex: none;
}
.tester {
    padding-top: 4px;
}
.side {
    width: 15px;
    padding: 0 1px 3px;
}
.side svg {
    margin: 2px 2px 4px;
}
.side div {
    height: calc(100% - 14px);
    background: linear-gradient(#d8e5f3, #bccbdc);
    display: flex;
    align-items: flex-end;
}
.side span {
    writing-mode: vertical-rl;
    transform: rotate(180deg);
    font: 11px/13px "DejaVu Sans";
    letter-spacing: 0;
    width: 13px;
    white-space: nowrap;
}
.tester .side span {
    padding-top: 2px;
}
.tester .side div {
    background: linear-gradient(#b9d1ea, #99b4d1);
}
.dockmain {
    flex: 1;
    display: flex;
    flex-direction: column;
    min-width: 0;
}
.dockbody {
    flex: 1;
    background: #fff;
    border: 1px solid #a0a0a0;
    border-width: 1px 1px 0 1px;
    border-right-color: #e3e3e3;
    min-height: 0;
}
.cols {
    display: grid;
    grid-template-columns: 163px 113px 140px 125px 125px 126px 124px 125px 125px 125px 137px 120px 1fr;
    height: 24px;
}
.cols span {
    text-align: right;
    line-height: 24px;
    padding-right: 5px;
    border-right: 1px solid #e3e3e3;
}
.cols .l {
    text-align: left;
    padding-left: 6px;
}
.cols .type {
    display: flex;
    align-items: center;
    justify-content: flex-end;
}
.balance {
    background: #c8c8c8;
    height: 20px;
    font-weight: bold;
    line-height: 20px;
    padding-left: 6px;
    display: flex;
    letter-spacing: -0.2px;
}
.balance span:first-child {
    width: 1395px;
}
.balance i {
    display: inline-block;
    width: 15px;
}
.profit {
    width: 24px;
    text-align: right;
}
sub {
    font-size: 10px;
    font-weight: bold;
    color: #f02020;
    vertical-align: -4px;
    line-height: 1px;
    margin-left: 1px;
    letter-spacing: -0.6px;
}
.services, .run {
    margin-left: auto;
    display: flex;
    align-items: center;
    height: 24px;
    color: #000;
}
.services b {
    margin: 0 13px 0 5px;
}
.services b:last-child {
    margin-right: 9px;
}
.services .off {
    color: #a8a8a8;
}
.form {
    display: flex;
}
.fields {
    flex: 1;
    padding-top: 8px;
    letter-spacing: -0.75px;
}
.row {
    display: flex;
    height: 21px;
    margin-bottom: 8px;
}
.row label {
    width: 126px;
    margin-right: 8px;
    text-align: right;
    line-height: 22px;
}
.row.fwd {
    margin-top: 16px;
}
.sel {
    background: #e1e1e1;
    border: 1px solid #adadad;
    padding: 0 3px 0 2px;
    margin-right: 7px;
    display: flex;
    align-items: center;
    justify-content: space-between;
}
.sel.white {
    background: #fff;
    border-color: #7a7a7a;
}
.sel.tight {
    letter-spacing: -0.9px;
}
.w599 { width: 600px; }
.w599 + .mini { margin-left: 1px; }
.w307 { width: 307px; }
.w117 { width: 117px; }
.w183 { width: 183px; }
.date {
    width: 117px;
    height: 20px;
    border: 1px solid #7a7a7a;
    margin-right: 7px;
    padding: 0 5px 0 2px;
    display: flex;
    align-items: center;
    justify-content: space-between;
    letter-spacing: -0.5px;
}
.date.off {
    color: #888;
}
.date.off svg {
    opacity: .4;
}
.mini {
    width: 21px;
    margin-left: 2px;
    margin-right: 7px;
    background: #e1e1e1;
    border: 1px solid #adadad;
    display: flex;
    align-items: center;
    justify-content: center;
    font-size: 11px;
}
.mini.g8 {
    margin-left: 1px;
}
.tester .scroll i {
    height: 64px;
    margin: 5px 0 auto;
}
.tester .tabs {
    padding-left: 2px;
}
.run button {
    width: 75px;
    height: 17px;
    margin-left: 6px;
    margin-right: 1px;
    padding: 0;
    background: #9ccc65;
    border: 1px solid #8bc34a;
    outline: 1px dotted #000;
    outline-offset: -3px;
    font: inherit;
    letter-spacing: inherit;
    line-height: 14px;
}
.run {
    height: 22px;
}

/* status line */
.status {
    height: 23px;
    display: flex;
    padding-top: 3px;
}
.status span {
    border-left: 1px solid #a0a0a0;
    padding-left: 6px;
    line-height: 20px;
    height: 19px;
    display: flex;
    align-items: center;
    gap: 8px;
    white-space: nowrap;
}
.status .help {
    width: 1227px;
    border: 0;
    padding-left: 2px;
}
.s128 { width: 128px; }
.status .s99 { width: 99px; padding-left: 5px; letter-spacing: -0.45px; }
.s71 { width: 71px; }
.s69 { width: 69px; }
.s66 { width: 66px; }
.s121 { width: 121px; }

/* windows taskbar */
.taskbar {
    height: 40px;
    background: #474747;
    display: flex;
    color: #fff;
}
.start {
    width: 48px;
    background: #3a332b;
    display: flex;
    align-items: center;
    justify-content: center;
}
.search {
    width: 288px;
    background: #f0f0f0;
    border: 1px solid #c4c4c4;
    display: flex;
    align-items: center;
    padding-left: 11px;
    color: #333;
    font-size: 15px;
    letter-spacing: -0.35px;
}
.search span {
    margin-left: 11px;
    white-space: nowrap;
}
.art {
    margin-left: auto;
    margin-right: 5px;
}
.task {
    width: 40px;
    margin-right: 9px;
    display: flex;
    align-items: center;
    justify-content: center;
    border-bottom: 2px solid #76b9ed;
}
.task.plain {
    width: 48px;
    margin-right: 7px;
    border: 0;
}
.task.cur {
    width: 48px;
    margin: 0 0 0 -4px;
    background: #6d6d6d;
}
.weather {
    margin-left: auto;
    width: 130px;
    background: linear-gradient(90deg, #4c4c4c, #555);
    display: flex;
    align-items: center;
    padding-left: 15px;
    gap: 10px;
    font-size: 15px;
    letter-spacing: -0.8px;
    white-space: nowrap;
}
.weather i {
    width: 20px;
    height: 20px;
    border-radius: 50%;
    background: linear-gradient(150deg, #ffc233, #f5680a);
}
.tray {
    width: 221px;
    background: #33332b;
    display: flex;
    align-items: center;
    padding-left: 14px;
}
.clock {
    width: 64px;
    margin-left: -15px;
    display: flex;
    flex-direction: column;
    align-items: center;
    line-height: 18px;
}
.notes {
    margin-left: 13px;
    position: relative;
}
.notes b {
    position: absolute;
    left: 8px;
    top: 7px;
    width: 17px;
    height: 17px;
    border: 1px solid #aaa;
    border-radius: 50%;
    background: #333;
    font-size: 13px;
    line-height: 15px;
    text-align: center;
}
```
FILE: script.js
```js
var NS = 'http://www.w3.org/2000/svg';

// high, open/close top, open/close bottom, low, 1 = bull 0 = bear; one bar every 4px from x = 306
var bars = [
[365,370,373,376,0],[370,373,376,379,0],[380,380,388,389,0],[379,379,388,388,1],[374,378,379,380,0],[374,376,379,380,1],[371,376,378,379,1],[365,366,376,379,1],
[366,366,369,371,0],[364,367,371,372,0],[368,369,371,373,0],[368,370,371,373,0],[369,370,373,374,0],[368,370,372,373,1],[370,371,373,374,0],[366,367,372,373,1],
[367,367,372,372,0],[371,372,376,376,0],[372,374,376,377,1],[369,370,375,377,1],[369,370,373,374,0],[370,371,373,374,0],[367,368,373,374,1],[364,365,369,370,1],
[365,365,369,370,0],[369,369,382,384,0],[373,376,383,390,1],[370,374,376,380,1],[371,373,374,376,0],[372,373,374,376,0],[371,373,374,378,0],[371,373,374,376,0],
[370,372,374,376,1],[370,372,373,374,0],[370,371,373,375,0],[369,370,372,374,0],[370,371,373,375,1],[366,367,373,374,1],[363,365,367,368,1],[362,364,365,367,0],
[361,363,364,365,0],[362,363,364,364,0],[362,363,364,365,0],[362,363,364,365,0],[362,363,364,365,0],[361,362,363,364,0],[361,362,363,364,0],[361,362,363,364,0],
[356,358,362,363,1],[355,356,358,359,1],[352,356,357,358,0],[347,348,355,356,1],[348,348,351,352,0],[348,348,350,354,1],[345,347,349,350,1],[343,344,347,348,1],
[340,343,344,346,0],[343,343,347,349,0],[346,348,355,356,0],[350,351,355,361,1],[349,351,357,359,0],[350,355,358,359,0],[356,356,361,362,0],[359,361,366,368,0],
[362,365,367,369,0],[366,367,370,373,0],[363,368,369,373,0],[361,364,372,373,1],[364,367,372,374,0],[367,369,371,373,0],[364,366,371,372,1],[359,363,366,367,1],
[363,364,368,370,0],[366,368,371,373,0],[369,370,373,374,0],[364,368,372,374,1],[363,364,370,371,1],[360,362,364,367,1],[359,360,364,367,1],[358,360,366,367,0],
[363,366,367,369,0],[362,366,372,373,0],[371,373,376,379,0],[374,375,377,379,0],[375,376,378,380,0],[375,377,381,383,0],[376,378,380,381,1],[373,376,378,379,1],
[374,377,378,379,0],[374,376,378,380,1],[369,371,377,378,1],[369,370,372,374,0],[371,372,374,375,0],[372,373,374,375,0],[372,373,374,376,0],[370,372,374,376,1],
[368,371,372,374,0],[367,369,373,374,1],[367,370,371,373,0],[366,368,371,374,1],[364,367,368,370,0],[367,368,372,373,0],[370,372,374,375,0],[371,373,374,376,0],
[371,374,375,378,0],[374,376,378,380,0],[376,377,381,382,0],[371,373,381,382,1],[371,373,376,379,0],[371,374,376,379,0],[371,373,376,379,1],[372,374,375,379,0],
[371,374,375,377,0],[371,373,375,376,0],[370,371,374,376,1],[365,367,371,373,1],[365,367,372,373,0],[367,368,372,373,1],[368,370,374,375,0],[371,373,374,376,0],
[369,372,375,378,0],[366,367,374,375,1],[365,367,373,374,0],[366,370,374,377,0],[371,373,375,381,0],[370,373,374,376,0],[371,374,375,377,0],[366,371,374,375,1],
[364,367,373,374,1],[366,367,373,375,0],[370,372,374,376,0],[368,372,374,376,0],[366,368,371,374,1],[357,365,369,373,1],[364,365,374,376,0],[366,373,374,376,0],
[373,374,384,385,0],[376,385,393,395,0],[393,394,403,412,0],[401,403,411,413,0],[408,411,423,427,0],[415,420,424,428,1],[414,418,421,422,1],[418,418,421,424,0],
[415,420,421,424,0],[419,420,424,432,0],[416,424,428,430,0],[422,425,427,432,1],[419,425,426,432,0],[423,424,431,432,0],[421,422,431,436,1],[415,415,422,423,1],
[414,414,415,426,0],[410,411,415,416,1],[403,406,411,412,1],[401,406,410,412,0],[409,410,412,419,0],[407,408,412,421,1],[406,408,411,416,1],[407,410,424,427,0],
[424,424,442,446,0],[434,434,443,444,1],[424,424,435,440,1],[418,424,428,431,0],[423,424,427,429,1],[424,424,436,447,0],[411,417,436,437,1],[414,415,417,426,1],
[410,414,415,419,0],[414,414,415,422,0],[411,413,416,419,1],[406,409,413,416,1],[407,409,411,416,0],[410,411,419,419,0],[417,418,433,434,0],[431,433,437,441,0],
[437,437,438,447,0],[430,433,439,441,1],[427,428,433,435,1],[427,427,428,435,0],[415,419,428,431,1],[415,415,420,422,1],[415,415,427,427,0],[416,417,427,428,1],
[411,415,418,420,1],[400,401,416,416,1],[401,401,407,410,0],[406,406,425,426,0],[424,425,430,433,0],[427,427,430,436,1],[427,427,431,433,0],[426,427,431,434,1],
[416,416,428,429,1],[415,417,422,424,0],[420,422,430,431,0],[427,429,433,435,0],[426,432,433,437,0],[430,432,434,441,0],[429,431,434,439,1],[422,424,431,434,1],
[421,423,425,427,1],[421,423,430,432,0],[428,429,430,438,0],[425,428,429,431,0],[424,427,429,430,0],[412,419,428,430,1],[414,419,426,427,0],[411,413,426,427,1],
[402,403,413,417,1],[392,392,403,408,1],[381,392,400,402,0],[284,366,399,477,1],[298,299,366,372,1],[250,281,299,304,1],[273,281,302,313,0],[292,302,317,318,0],
[310,316,332,347,0],[301,308,331,338,1],[308,308,358,359,0],[334,356,357,360,0],[347,350,356,380,1],[340,347,350,360,1],[338,339,347,358,1],[316,319,339,344,1],
[316,319,347,358,0],[328,330,347,348,1],[315,322,330,337,1],[314,322,334,335,0],[329,333,334,344,0],[322,329,333,334,1],[323,330,345,347,0],[342,344,356,358,0],
[351,356,384,385,0],[365,372,383,384,1],[353,354,373,374,1],[347,354,361,365,0],[346,348,360,361,1],[347,348,349,360,0],[337,338,350,365,1],[325,326,338,340,1],
[319,322,327,334,1],[320,322,353,356,0],[349,353,357,366,0],[357,357,362,367,0],[360,362,368,370,0],[364,368,376,379,0],[375,376,388,389,0],[381,383,388,392,1],
[373,375,383,384,1],[372,375,393,397,0],[392,393,402,407,0],[388,398,402,405,1],[394,396,398,403,1],[376,379,396,397,1],[376,379,386,390,0],[384,385,386,393,0],
[384,385,393,397,0],[392,393,398,407,0],[381,382,398,399,1],[379,382,388,390,0],[385,389,398,400,0],[396,398,405,409,0],[398,401,405,407,1],[397,397,401,407,1],
[397,398,400,406,0],[397,399,411,413,0],[401,405,411,412,1],[402,405,417,420,0],[412,415,418,419,1],[403,410,415,417,1],[407,410,415,418,0],[409,410,415,417,1],
[408,410,420,421,0],[411,412,419,422,1],[408,410,413,415,1],[405,410,411,414,0],[404,407,411,412,1],[401,406,407,411,0],[405,407,410,415,0],[409,410,412,417,0],
[402,403,412,413,1],[399,402,404,405,1],[396,399,402,404,1],[392,398,400,401,0],[393,396,399,399,1],[392,394,397,403,1],[392,394,399,402,0],[393,398,399,399,0],
[389,391,399,399,1],[383,388,392,392,1],[388,388,396,397,0],[394,397,402,405,0],[398,400,403,404,1],[399,400,401,405,0],[397,400,413,415,0],[409,411,414,416,1],
[411,411,416,417,0],[413,414,417,418,1],[410,412,415,416,1],[407,409,412,413,1],[409,409,410,414,0],[401,403,411,412,1],[399,402,404,405,1],[402,402,407,408,0],
[405,406,407,408,0],[406,407,411,413,0],[409,410,413,414,1],[409,410,413,414,0],[408,409,413,415,1],[409,409,410,414,0],[407,410,412,413,1],[400,400,411,411,1],
[395,400,406,409,0]
];

// x, baseline, width, text, class
var marks = [
[418,367,33,'CHoCH','g'],[378,386,32,'CHoCH','r'],[596,355,20,'EQH','r'],[573,382,18,'EQL','g'],[602,382,33,'CHoCH','r'],
[727,394,39,'CHoCH','r big'],[811,391,32,'CHoCH','r'],[734,368,33,'CHoCH','g'],[793,363,19,'BOS','g'],[975,354,39,'CHoCH','g big'],
[918,445,18,'BOS','r'],[946,456,18,'EQL','g'],[1002,404,32,'CHoCH','g'],[1098,412,18,'BOS','g'],[1194,389,32,'CHoCH','r'],
[1253,394,19,'BOS','r'],[1309,415,18,'EQL','g'],[1325,416,18,'BOS','r'],[1450,426,18,'EQL','g'],[1607,246,45,'Weak High','r'],[1607,486,45,'Strong Low','g']
];

var times = ['7 Mar 2024', '7 Mar 23:10', '8 Mar 00:30', '8 Mar 01:50', '8 Mar 03:10', '8 Mar 04:30', '8 Mar 05:50', '8 Mar 07:10', '8 Mar 08:30', '8 Mar 09:50', '8 Mar 11:10', '8 Mar 12:30', '8 Mar 13:50', '8 Mar 15:10', '8 Mar 16:30', '8 Mar 17:50', '8 Mar 19:10', '8 Mar 20:30', '8 Mar 21:50', '8 Mar 23:10'];

function rect(parent, x, y, w, h, fill) {
    var r = document.createElementNS(NS, 'rect');
    r.setAttribute('x', x);
    r.setAttribute('y', y);
    r.setAttribute('width', w);
    r.setAttribute('height', h);
    r.setAttribute('fill', fill);
    parent.appendChild(r);
}

function text(parent, x, y, len, str, cls) {
    var t = document.createElementNS(NS, 'text');
    t.setAttribute('x', x);
    t.setAttribute('y', y);
    t.setAttribute('textLength', len);
    t.setAttribute('lengthAdjust', 'spacingAndGlyphs');
    if (cls) t.setAttribute('class', cls);
    t.textContent = str;
    parent.appendChild(t);
}

var candles = document.getElementById('candles');
bars.forEach(function (b, i) {
    var x = 306 + i * 4;
    rect(candles, x, b[0], 1, b[3] - b[0] + 1, '#0f0');
    rect(candles, x - 1, b[1], 3, b[2] - b[1] + 1, '#0f0');
    if (b[2] - b[1] > 1) {
        rect(candles, x, b[1] + 1, 1, b[2] - b[1] - 1, b[4] ? '#000' : '#fff');
    }
});

var labels = document.getElementById('marks');
marks.forEach(function (m) {
    text(labels, m[0], m[1], m[2], m[3], m[4]);
});

var axis = document.getElementById('axis');
for (var i = 0; i < 15; i++) {
    var y = Math.round(127 + i * 32.4);
    rect(axis, 1866, y, 4, 1, '#fff');
    text(axis, 1871, y + 4, 32, (1.1015 - i * 0.0009).toFixed(5));
}
times.forEach(function (s, i) {
    rect(axis, 302 + i * 64, 613, 1, 5, '#fff');
    text(axis, 301 + i * 64, 626, i ? 50 : 48, s);
});
```
